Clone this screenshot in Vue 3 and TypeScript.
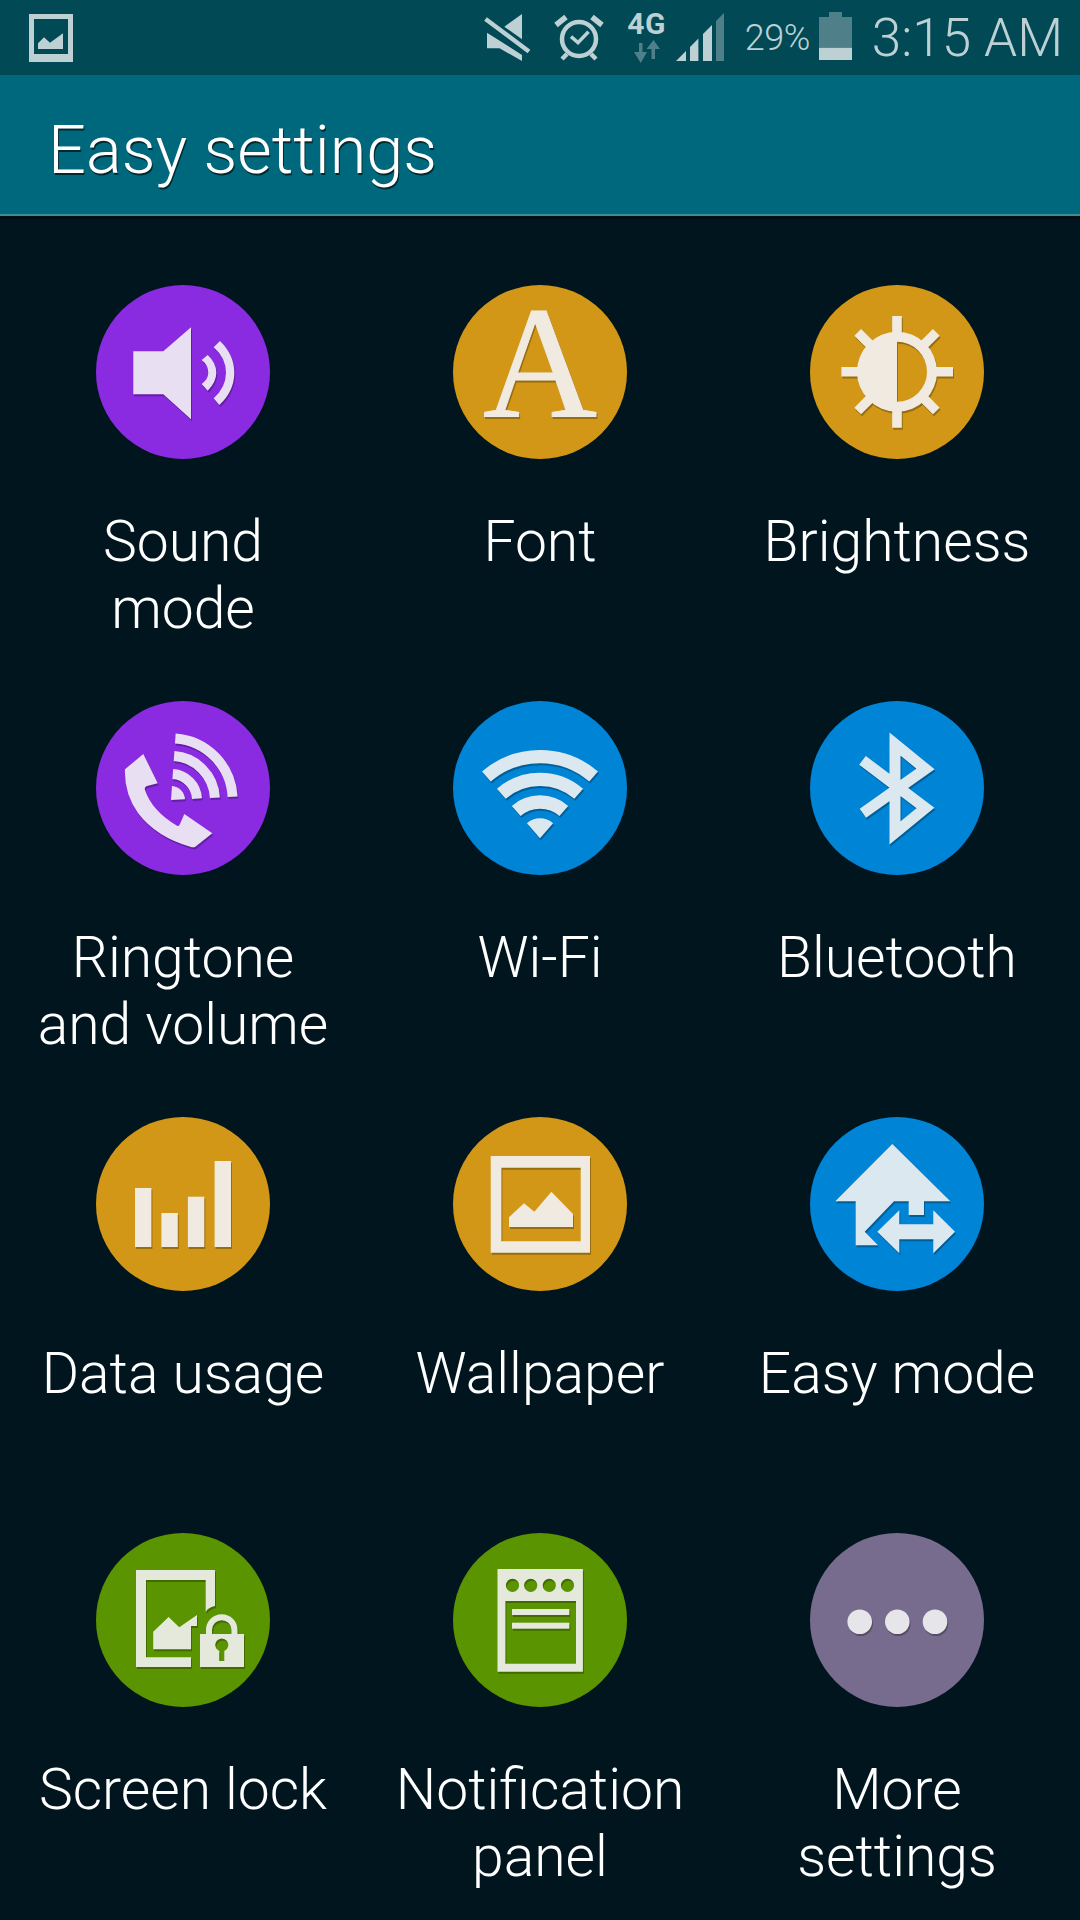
<script setup lang="ts">
interface Tile {
  icon: string
  tone: 'purple' | 'amber' | 'blue' | 'green' | 'grey'
  label: string
}

const tiles: Tile[] = [
  { icon: 'sound', tone: 'purple', label: 'Sound\nmode' },
  { icon: 'font', tone: 'amber', label: 'Font' },
  { icon: 'brightness', tone: 'amber', label: 'Brightness' },
  { icon: 'ringtone', tone: 'purple', label: 'Ringtone\nand volume' },
  { icon: 'wifi', tone: 'blue', label: 'Wi-Fi' },
  { icon: 'bluetooth', tone: 'blue', label: 'Bluetooth' },
  { icon: 'data', tone: 'amber', label: 'Data usage' },
  { icon: 'wallpaper', tone: 'amber', label: 'Wallpaper' },
  { icon: 'easy', tone: 'blue', label: 'Easy mode' },
  { icon: 'lock', tone: 'green', label: 'Screen lock' },
  { icon: 'panel', tone: 'green', label: 'Notification\npanel' },
  { icon: 'more', tone: 'grey', label: 'More\nsettings' },
]
</script>

<template>
  <div class="screen">
    <header class="status-bar">
      <svg class="gallery" width="44" height="48" viewBox="0 0 44 48">
        <path fill-rule="evenodd" d="M0 0H44V48H0ZM5 5V40H39V5Z" />
        <path d="M9 29.300L15 23.300L21 28.700L34 19.300V35H9Z" />
      </svg>
      <div class="status-right">
        <svg class="s-mute" width="48" height="50" viewBox="0 0 48 50">
          <path d="M20.300 14.700L38 2V27.300Z" />
          <path d="M3 20.700L38 43V49L15.500 36.300H3Z" />
          <path class="line" stroke-width="4.500" d="M1.500 7L45 39.500" />
        </svg>
        <svg class="s-alarm" width="50" height="50" viewBox="0 0 50 50">
          <circle class="line" cx="25" cy="27" r="17" stroke-width="4.500" />
          <path class="line" stroke-width="5.500" d="M2 13L12 5M38 5L48 13" />
          <path class="line" stroke-width="4.500" d="M8 47L13 42M42 47L37 42" />
          <path class="line" stroke-width="3.500" d="M17 24.700L24 30.700L34.500 19.700" />
        </svg>
        <div class="s-net">
          <span class="net-label">4G</span>
          <svg class="net-arrows" width="28" height="24" viewBox="0 0 28 24">
            <path d="M5 3H8.500V12H13L6.750 23L0 12H5Z" />
            <path d="M17.500 19V9H12.500L19.500 0L26 9H21V19Z" />
          </svg>
        </div>
        <svg class="s-signal" width="48" height="48" viewBox="0 0 48 48">
          <path d="M0 48L10 38V48Z" />
          <path d="M14 34L22.400 25.600V48H14Z" />
          <path d="M27 21L36 12V48H27Z" />
          <path class="dim" d="M40 8L48 0V48H40Z" />
        </svg>
        <span class="s-percent">29%</span>
        <svg class="s-battery" width="33" height="48" viewBox="0 0 33 48">
          <path class="dim" d="M10 0H23V5H33V35.700H0V5H10Z" />
          <path d="M0 35.700H33V48H0Z" />
        </svg>
        <span class="s-time">3:15 AM</span>
      </div>
    </header>

    <div class="action-bar">
      <h1 class="title">Easy settings</h1>
    </div>

    <main class="grid">
      <div v-for="tile in tiles" :key="tile.icon" class="tile">
        <svg class="badge" :class="tile.tone" width="174" height="174" viewBox="0 0 174 174">
          <circle class="disc" cx="87" cy="87" r="87" />
          <g class="glyph">
            <template v-if="tile.icon === 'sound'">
              <path d="M37.300 66.300H67.300L95 42.300V134.300L67.300 109.300H37.300Z" />
              <path d="M105.700 75L111.700 70Q120.300 78 120.300 87.700Q120.300 97 111.700 105.700L105.700 99Q112.300 94 112.300 87.700Q112.300 80 105.700 75Z" />
              <path d="M117.700 62.300L124 56Q138.300 70 138.300 87.700Q138.300 106 123.300 120L117.700 113.300Q130 102 130 87.700Q130 73 117.700 62.300Z" />
            </template>
            <template v-else-if="tile.icon === 'font'">
              <text class="font-a" x="87" y="130.700" text-anchor="middle">A</text>
            </template>
            <template v-else-if="tile.icon === 'brightness'">
              <path fill-rule="evenodd" d="M87 46.700A40 40 0 1 0 87 126.700A40 40 0 1 0 87 46.700ZM87 56.700A30 30 0 0 1 87 116.700Z" />
              <path d="M82.200 31H91.800V50H82.200ZM82.200 124H91.800V142.700H82.200ZM31.400 82H50V91.500H31.400ZM124 82H143V91.500H124Z" />
              <path class="line thick" d="M47.700 47.400L60 59.700M126.300 47.400L114 59.700M47.700 126L60 113.700M126.300 126L114 113.700" />
            </template>
            <template v-else-if="tile.icon === 'ringtone'">
              <path d="M29 68.300L47.300 53L61.700 82.300L51 85Q48 86 49 89Q56 110 81 124.700Q83 125.700 84 123L88.300 113L116.300 132.300L99 146Q97 146.500 95 146Q60 136 42 112Q28 92 29 68.300Z" />
              <path d="M75 99L76 85A14 14 0 0 1 89 98.300Z" />
              <path class="line wave" d="M76.800 73.100A26 26 0 0 1 101 97.600" />
              <path class="line wave" d="M78.100 55.100A44 44 0 0 1 118.900 96.700" />
              <path class="line wave" d="M79.300 37.500A61.700 61.700 0 0 1 136.600 95.800" />
            </template>
            <template v-else-if="tile.icon === 'wifi'">
              <path class="line arc" d="M33.400 75.600A81.700 81.700 0 0 1 140.600 75.600" />
              <path class="line arc" d="M48.300 92.800A59 59 0 0 1 125.700 92.800" />
              <path class="line arc" d="M63.200 109.900A36.300 36.300 0 0 1 110.800 109.900" />
              <path d="M87 137.300L73.900 122.200A20 20 0 0 1 100.100 122.200Z" />
            </template>
            <template v-else-if="tile.icon === 'bluetooth'">
              <path class="line rune" d="M52.900 112.300L115.500 68L85 43V132L115.500 107L52.500 59.300" />
            </template>
            <template v-else-if="tile.icon === 'data'">
              <rect x="39" y="71" width="16.400" height="59" />
              <rect x="65.400" y="96" width="16.400" height="34" />
              <rect x="91.900" y="79.700" width="16.400" height="50.300" />
              <rect x="118.600" y="44" width="16.400" height="86" />
            </template>
            <template v-else-if="tile.icon === 'wallpaper'">
              <path fill-rule="evenodd" d="M37.700 39H137V135.700H37.700ZM48.400 50.700V124.300H127.700V50.700Z" />
              <path d="M56 100.300L71 86.300L81.300 94.700L98.400 74.700L120 97V110H56Z" />
            </template>
            <template v-else-if="tile.icon === 'easy'">
              <path d="M82.300 27L140.300 84.300H114V98H98.700V84.300H84L54.700 114.700L68 128.300H45.700V84.300H25.300Z" />
              <path d="M67.300 114.700L89.300 93.300V107.300H123.300V93.300L145 114.700L123.300 136.300V122.300H89.300V136.300Z" />
            </template>
            <template v-else-if="tile.icon === 'lock'">
              <path d="M40 37H119V73Q113 74 109.700 78.700V47H50V124.300H95V134H40Z" />
              <path d="M57.200 98.700L72.600 84L83.300 94.300L101 82V93H95V116.300H57.200Z" />
              <path fill-rule="evenodd" d="M104 101H148V134H104ZM123.300 128H128.300V118A6.500 6.500 0 1 0 123.300 118Z" />
              <path class="line shackle" d="M113 101V97A12.700 12.700 0 0 1 138.500 97V101" />
            </template>
            <template v-else-if="tile.icon === 'panel'">
              <path fill-rule="evenodd" d="M44.500 36H129.900V138.700H44.500ZM52.400 68V130.700H123V68ZM59.500 45.700A6.600 6.600 0 1 0 59.500 58.900A6.600 6.600 0 1 0 59.500 45.700ZM77.700 45.700A6.600 6.600 0 1 0 77.700 58.900A6.600 6.600 0 1 0 77.700 45.700ZM96.300 45.700A6.600 6.600 0 1 0 96.300 58.900A6.600 6.600 0 1 0 96.300 45.700ZM114.500 45.700A6.600 6.600 0 1 0 114.500 58.900A6.600 6.600 0 1 0 114.500 45.700Z" />
              <rect x="59" y="76" width="57.300" height="6" />
              <rect x="59" y="89.700" width="57.300" height="6" />
            </template>
            <template v-else>
              <circle cx="49.700" cy="88.700" r="12.300" />
              <circle cx="87.300" cy="88.700" r="12.300" />
              <circle cx="125" cy="88.700" r="12.300" />
            </template>
          </g>
        </svg>
        <div class="label">{{ tile.label }}</div>
      </div>
    </main>
  </div>
</template>

<style>
html,
body {
  margin: 0;
  background: #00151e;
}
</style>

<style scoped>
.screen {
  width: 1080px;
  height: 1920px;
  overflow: hidden;
  background: #00151e;
  font-family: Roboto, "Liberation Sans", sans-serif;
  font-weight: 300;
}

.status-bar {
  height: 75px;
  background: #004955;
  display: flex;
  align-items: flex-start;
  justify-content: space-between;
  padding: 0 17px 0 29px;
  box-sizing: border-box;
  color: #bdd0d4;
}

.status-bar svg {
  display: block;
  fill: #bdd0d4;
  flex: none;
}

.status-bar svg .line {
  fill: none;
  stroke: #bdd0d4;
}

.status-bar svg .dim {
  fill: #4f808a;
}

.gallery {
  margin-top: 14px;
}

.status-right {
  display: flex;
  align-items: flex-start;
}

.s-mute {
  margin-top: 12px;
}

.s-alarm {
  margin: 12px 0 0 22px;
}

.s-net {
  width: 39px;
  margin: 0 0 0 23.500px;
  height: 64px;
}

.net-label {
  display: block;
  font-size: 30px;
  line-height: 29px;
  margin-top: 9px;
  font-weight: 700;
  letter-spacing: 0.5px;
}

.status-bar svg.net-arrows {
  fill: #4f808a;
  margin: 2px 0 0 7px;
}

.s-signal {
  margin: 13px 0 0 10px;
}

.s-percent {
  margin: 17px 0 0 20.500px;
  font-size: 36px;
  line-height: 42px;
  width: 66px;
  letter-spacing: -0.5px;
}

.s-battery {
  margin: 12px 0 0 8px;
}

.s-time {
  margin: 7px 0 0 20px;
  font-size: 53px;
  line-height: 62px;
  white-space: nowrap;
}

.action-bar {
  height: 139px;
  background: #00687d;
  border-bottom: 2px solid #3f8c96;
  box-shadow: 0 3px 0 #000d14;
  display: flex;
  align-items: flex-start;
  padding-left: 48px;
}

.title {
  margin: 37px 0 0;
  font-size: 66.700px;
  line-height: 76px;
  font-weight: 300;
  color: #fff;
  text-shadow: 1px 2px 0 rgba(0, 0, 0, 0.6);
}

.grid {
  display: grid;
  grid-template-columns: repeat(3, 357px);
  grid-auto-rows: 416px;
  justify-content: center;
  padding-top: 69px;
}

.tile {
  display: flex;
  flex-direction: column;
  align-items: center;
}

.badge {
  display: block;
  flex: none;
  overflow: visible;
}

.label {
  margin-top: 49px;
  width: 357px;
  text-align: center;
  white-space: pre-line;
  font-size: 57px;
  line-height: 67px;
  color: #fff;
}

.disc {
  fill: var(--disc);
}

.glyph {
  fill: var(--ink);
  filter: drop-shadow(1px 2px 0 rgba(0, 0, 0, 0.28));
}

.glyph .line {
  fill: none;
  stroke: var(--ink);
}

.purple {
  --disc: #8a2be2;
  --ink: #e8dff2;
}

.amber {
  --disc: #d29716;
  --ink: #f0eae0;
}

.blue {
  --disc: #0084d5;
  --ink: #dce8f0;
}

.green {
  --disc: #5a9400;
  --ink: #e4e9dc;
}

.grey {
  --disc: #786c8e;
  --ink: #e6e6ea;
}

.font-a {
  font-family: "Liberation Serif", serif;
  font-size: 158px;
  font-weight: 400;
  stroke: var(--ink);
  stroke-width: 1px;
}

.thick {
  stroke-width: 9.500px;
}

.wave {
  stroke-width: 10px;
}

.arc {
  stroke-width: 13.300px;
}

.rune {
  stroke-width: 11px;
  stroke-miterlimit: 10;
}

.shackle {
  stroke-width: 6px;
}
</style>
